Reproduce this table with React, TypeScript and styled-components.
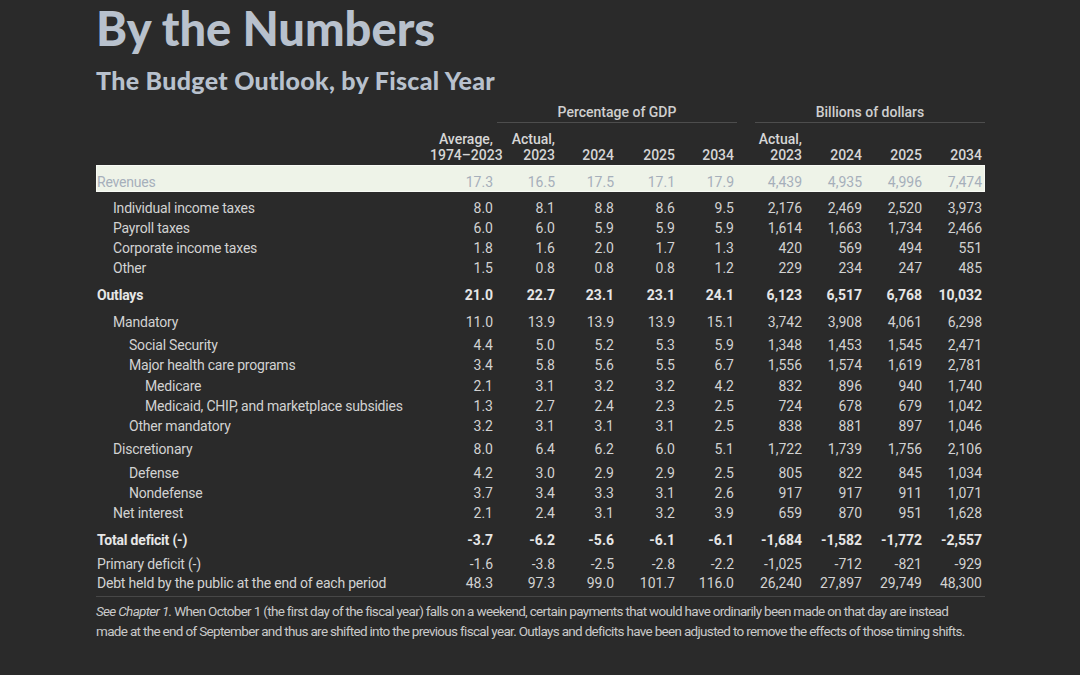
import styled, { createGlobalStyle } from 'styled-components';

const GlobalStyle = createGlobalStyle`
  html, body {
    margin: 0;
    padding: 0;
    background: #2a2a2a;
  }
`;

const COLS = '334px 63px 62px 59px 61px 59px 68px 60px 60px 60px';

const Page = styled.main`
  width: 1080px;
  height: 675px;
  box-sizing: border-box;
  padding: 4px 0 0 96px;
  background: #2a2a2a;
  font-family: Roboto, 'Liberation Sans', sans-serif;
  color: #d2d2d2;
  overflow: hidden;
`;

const Title = styled.h1`
  margin: 0;
  font-family: Lato, 'Open Sans', sans-serif;
  font-weight: 900;
  font-size: 47px;
  line-height: 48px;
  color: #b8c1cd;
`;

const Subtitle = styled.h2`
  margin: 16px 0 0;
  font-family: Lato, 'Open Sans', sans-serif;
  font-weight: 900;
  font-size: 25px;
  line-height: 24px;
  letter-spacing: 0.3px;
  color: #b8c1cd;
`;

const Table = styled.section`
  width: 889px;
  margin-top: 10px;
`;

const Row = styled.div<{ $mt?: number; $bold?: boolean }>`
  display: grid;
  grid-template-columns: ${COLS};
  padding-right: 3px;
  margin-top: ${p => p.$mt ?? 0}px;
  font-size: 14px;
  line-height: 20px;
  font-weight: ${p => (p.$bold ? 700 : 400)};
  color: ${p => (p.$bold ? '#e6e6e6' : '#d2d2d2')};
`;

const HighlightRow = styled(Row)`
  margin-top: 3px;
  padding-top: 8px;
  height: 27px;
  line-height: 19px;
  box-sizing: border-box;
  background: #eef3e8;
  color: #a6afbb;
  box-shadow: inset 0 0 0 1px #f8faf5;
`;

const GroupLabel = styled.div<{ $from: number; $to: number; $inset: number }>`
  grid-column: ${p => p.$from} / ${p => p.$to};
  margin-left: ${p => p.$inset}px;
  margin-right: -3px;
  text-align: center;
  font-weight: 500;
  color: #cfcfcf;
  border-bottom: 1px solid #4d4d4d;
`;

const HeadRow = styled(Row)`
  margin-top: 7px;
  padding-top: 1px;
  height: 32px;
  box-sizing: border-box;
  line-height: 16px;
  font-weight: 500;
  color: #d6d6d6;
  align-items: end;
`;

const HeadCell = styled.div`
  text-align: right;
  white-space: nowrap;
  margin-bottom: -1px;
`;

const Label = styled.div<{ $level?: number }>`
  padding-left: ${p => 1 + (p.$level ?? 0) * 16}px;
  letter-spacing: -0.2px;
  white-space: nowrap;
`;

const Num = styled.div`
  text-align: right;
  white-space: nowrap;
`;

const Rule = styled.div`
  width: 889px;
  margin-top: 3px;
  border-top: 1px solid #474747;
`;

const Note = styled.p`
  margin: 4px 0 0;
  font-family: Roboto, 'Liberation Sans', sans-serif;
  font-size: 13.5px;
  line-height: 20px;
  letter-spacing: -0.68px;
  color: #c9c9c9;
  white-space: nowrap;

  em {
    font-style: italic;
  }
`;

type Line = {
  label: string;
  level?: number;
  mt?: number;
  bold?: boolean;
  values: string[];
};

const revenues = ['17.3', '16.5', '17.5', '17.1', '17.9', '4,439', '4,935', '4,996', '7,474'];

const lines: Line[] = [
  { label: 'Individual income taxes', level: 1, mt: 6, values: ['8.0', '8.1', '8.8', '8.6', '9.5', '2,176', '2,469', '2,520', '3,973'] },
  { label: 'Payroll taxes', level: 1, values: ['6.0', '6.0', '5.9', '5.9', '5.9', '1,614', '1,663', '1,734', '2,466'] },
  { label: 'Corporate income taxes', level: 1, values: ['1.8', '1.6', '2.0', '1.7', '1.3', '420', '569', '494', '551'] },
  { label: 'Other', level: 1, values: ['1.5', '0.8', '0.8', '0.8', '1.2', '229', '234', '247', '485'] },
  { label: 'Outlays', bold: true, mt: 7, values: ['21.0', '22.7', '23.1', '23.1', '24.1', '6,123', '6,517', '6,768', '10,032'] },
  { label: 'Mandatory', level: 1, mt: 7, values: ['11.0', '13.9', '13.9', '13.9', '15.1', '3,742', '3,908', '4,061', '6,298'] },
  { label: 'Social Security', level: 2, mt: 3, values: ['4.4', '5.0', '5.2', '5.3', '5.9', '1,348', '1,453', '1,545', '2,471'] },
  { label: 'Major health care programs', level: 2, values: ['3.4', '5.8', '5.6', '5.5', '6.7', '1,556', '1,574', '1,619', '2,781'] },
  { label: 'Medicare', level: 3, mt: 1, values: ['2.1', '3.1', '3.2', '3.2', '4.2', '832', '896', '940', '1,740'] },
  { label: 'Medicaid, CHIP, and marketplace subsidies', level: 3, values: ['1.3', '2.7', '2.4', '2.3', '2.5', '724', '678', '679', '1,042'] },
  { label: 'Other mandatory', level: 2, values: ['3.2', '3.1', '3.1', '3.1', '2.5', '838', '881', '897', '1,046'] },
  { label: 'Discretionary', level: 1, mt: 3, values: ['8.0', '6.4', '6.2', '6.0', '5.1', '1,722', '1,739', '1,756', '2,106'] },
  { label: 'Defense', level: 2, mt: 4, values: ['4.2', '3.0', '2.9', '2.9', '2.5', '805', '822', '845', '1,034'] },
  { label: 'Nondefense', level: 2, values: ['3.7', '3.4', '3.3', '3.1', '2.6', '917', '917', '911', '1,071'] },
  { label: 'Net interest', level: 1, values: ['2.1', '2.4', '3.1', '3.2', '3.9', '659', '870', '951', '1,628'] },
  { label: 'Total deficit (-)', bold: true, mt: 7, values: ['-3.7', '-6.2', '-5.6', '-6.1', '-6.1', '-1,684', '-1,582', '-1,772', '-2,557'] },
  { label: 'Primary deficit (-)', mt: 4, values: ['-1.6', '-3.8', '-2.5', '-2.8', '-2.2', '-1,025', '-712', '-821', '-929'] },
  { label: 'Debt held by the public at the end of each period', mt: -1, values: ['48.3', '97.3', '99.0', '101.7', '116.0', '26,240', '27,897', '29,749', '48,300'] },
];

const heads: [string, string][] = [
  ['Average,', '1974–2023'],
  ['Actual,', '2023'],
  ['', '2024'],
  ['', '2025'],
  ['', '2034'],
  ['Actual,', '2023'],
  ['', '2024'],
  ['', '2025'],
  ['', '2034'],
];

export default function App() {
  return (
    <>
      <GlobalStyle />
      <Page>
        <Title>By the Numbers</Title>
        <Subtitle>The Budget Outlook, by Fiscal Year</Subtitle>

        <Table>
          <Row>
            <GroupLabel $from={3} $to={7} $inset={4}>Percentage of GDP</GroupLabel>
            <GroupLabel $from={7} $to={11} $inset={21}>Billions of dollars</GroupLabel>
          </Row>

          <HeadRow>
            <div />
            {heads.map(([top, bottom], i) => (
              <HeadCell key={i}>
                {top}
                <br />
                {bottom}
              </HeadCell>
            ))}
          </HeadRow>

          <HighlightRow>
            <Label>Revenues</Label>
            {revenues.map((v, i) => (
              <Num key={i}>{v}</Num>
            ))}
          </HighlightRow>

          {lines.map(line => (
            <Row key={line.label} $mt={line.mt} $bold={line.bold}>
              <Label $level={line.level}>{line.label}</Label>
              {line.values.map((v, i) => (
                <Num key={i}>{v}</Num>
              ))}
            </Row>
          ))}
        </Table>

        <Rule />
        <Note>
          <em>See Chapter 1.</em> When October 1 (the first day of the fiscal year) falls on a weekend, certain payments that would have ordinarily been made on that day are instead
          <br />
          made at the end of September and thus are shifted into the previous fiscal year. Outlays and deficits have been adjusted to remove the effects of those timing shifts.
        </Note>
      </Page>
    </>
  );
}
